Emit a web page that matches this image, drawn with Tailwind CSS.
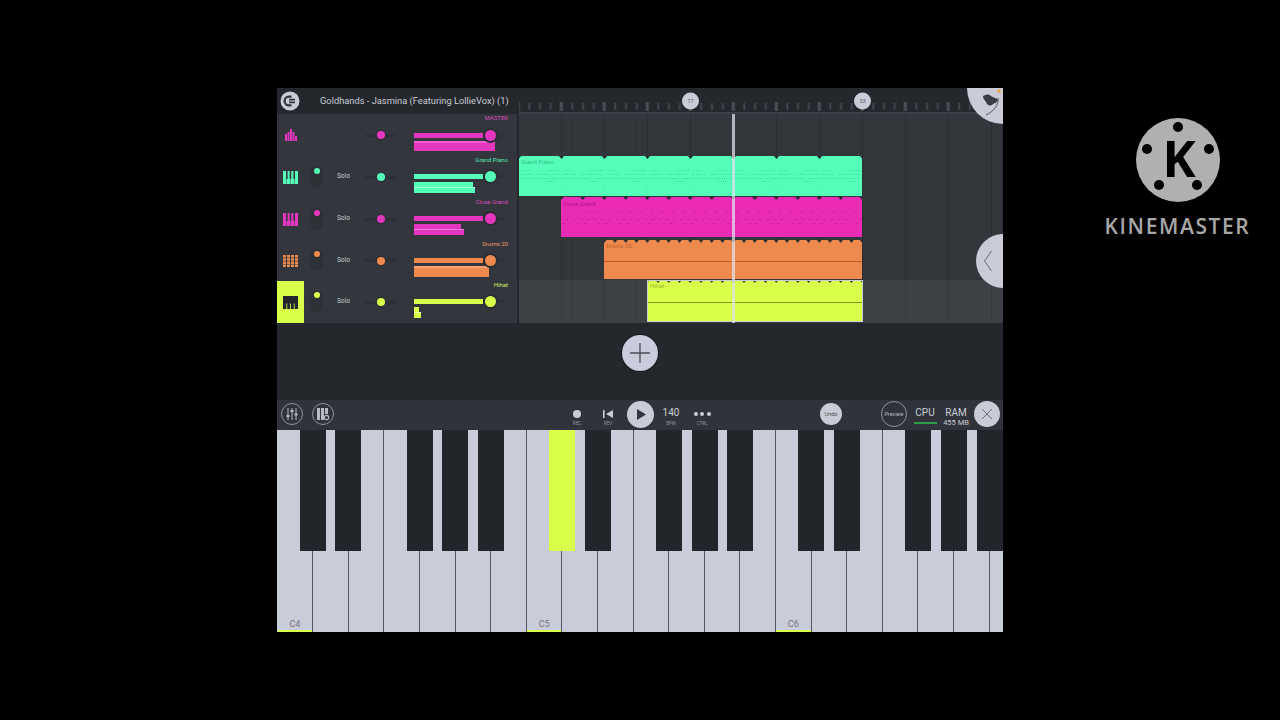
<!DOCTYPE html>
<html lang="en">
<head>
  <meta charset="UTF-8" />
  <title>FL Studio Mobile</title>
  <script src="https://cdn.jsdelivr.net/npm/@tailwindcss/browser@4"></script>
</head>
<body class="relative h-[720px] w-[1280px] overflow-hidden bg-black pl-[277px] pt-[88px] font-['Roboto',sans-serif]">

  <!-- shared icons -->
  <svg class="hidden">
    <symbol id="keys" viewBox="0 0 15 13">
      <path d="M0 0h15v13H0z" fill="currentColor"/>
      <path d="M3 0h1.6v8H3zM6.7 0h1.6v8H6.7zM10.4 0H12v8h-1.6zM3.6 8h.4v5h-.4zM7.3 8h.4v5h-.4zM11 8h.4v5H11z" fill="#33373d"/>
    </symbol>
  </svg>

  <div class="relative h-[544px] w-[726px] overflow-hidden bg-[#24282d]">

    <!-- top bar -->
    <div class="flex h-[26px] bg-[#24272c]">
      <div class="flex w-[242px] shrink-0 items-center">
        <svg class="ml-[3px] h-[20px] w-[20px] shrink-0" viewBox="0 0 20 20">
          <circle cx="10" cy="10" r="9.5" fill="#c9ccd5"/>
          <path d="M11.5 5.6H9a4.4 4.4 0 0 0 0 8.8h2.5" fill="none" stroke="#33363c" stroke-width="2.2"/>
          <path d="M9 8.6h6M9 11.4h6" stroke="#33363c" stroke-width="1.6"/>
        </svg>
        <span class="ml-[20px] whitespace-nowrap text-[9.3px] text-[#c8ccd4]">Goldhands - Jasmina (Featuring LollieVox) (1)</span>
      </div>
      <svg class="h-[26px] w-[484px]" viewBox="0 0 484 26">
        <defs>
          <pattern id="ticks" width="43" height="26" patternUnits="userSpaceOnUse" x="-0.7">
            <rect x="41.5" y="14" width="3" height="9" fill="#4c5056"/>
            <rect x="-1.5" y="14" width="3" height="9" fill="#4c5056"/>
            <rect x="10" y="15" width="2" height="7" fill="#42464c"/>
            <rect x="20.75" y="15" width="2" height="7" fill="#42464c"/>
            <rect x="31.5" y="15" width="2" height="7" fill="#42464c"/>
          </pattern>
        </defs>
        <rect width="484" height="24" fill="url(#ticks)"/>
        <rect y="24" width="484" height="2" fill="#3c4046"/>
        <circle cx="171.5" cy="13" r="8.5" fill="#c9ccd7"/>
        <text x="171.5" y="15" font-size="5.5" text-anchor="middle" fill="#555962">17</text>
        <circle cx="343.5" cy="13" r="8.5" fill="#c9ccd7"/>
        <text x="343.5" y="15" font-size="5.5" text-anchor="middle" fill="#555962">33</text>
      </svg>
    </div>

    <!-- corner button -->
    <div class="absolute -right-[36px] -top-[36px] z-10 h-[72px] w-[72px] rounded-full bg-[#c9ccd7]">
      <svg class="absolute bottom-0 left-0 h-[36px] w-[36px]" viewBox="0 0 36 36">
        <path d="M16 8c3-2 6-2 8 0 3 2 6 2 7 4-1 3-4 3-6 5-3 1-5 0-6-3-1-2-3-3-3-6z" fill="#3a3d44"/>
        <path d="M31 10c1 7-5 14-12 17" fill="none" stroke="#55585f" stroke-width="1"/>
        <circle cx="32" cy="3" r="2" fill="#e8a860"/>
      </svg>
    </div>

    <!-- tracks -->
    <div class="flex h-[209px]">
      <div class="w-[240px] bg-[#33373d]">

        <!-- master -->
        <div class="flex h-[42px]">
          <div class="flex w-[27px] items-center justify-center">
            <svg class="h-[12px] w-[12px]" viewBox="0 0 12 12" fill="#e536c0"><path d="M0 5h2v7H0zM2.5 3h2v9h-2zM5 0h2v12H5zM7.5 3h2v9h-2zM10 7h2v5h-2z"/></svg>
          </div>
          <div class="w-[61px]"></div>
          <div class="flex w-[32px] items-center">
            <div class="h-[3px] w-[12px] bg-[#2d3136]"></div>
            <div class="h-[8px] w-[8px] rounded-full bg-[#e536c0] ring-1 ring-[#2a2d33]"></div>
            <div class="h-[3px] w-[12px] bg-[#2d3136]"></div>
          </div>
          <div class="ml-[17px] w-[94px]">
            <div class="h-[8px] text-right text-[6px] leading-[8px] text-[#d84cb8]">MASTER</div>
            <div class="mt-[7px] flex h-[12px] items-center">
              <div class="h-[5px] w-[69px] bg-[#e536c0]"></div>
              <div class="ml-[2px] h-[11px] w-[11px] rounded-full bg-[#e536c0] ring-2 ring-[#2a2d33]"></div>
              <div class="h-[3px] w-[8px] bg-[#2d3136]"></div>
            </div>
            <div class="h-[10px] w-[81px] border-t-2 border-[#f25ed0] bg-[#e536c0]"></div>
          </div>
        </div>

        <!-- grand piano -->
        <div class="flex h-[42px]">
          <div class="flex w-[27px] items-center justify-center">
            <svg class="h-[13px] w-[15px] text-[#56fdb8]"><use href="#keys"/></svg>
          </div>
          <div class="ml-[6px] mt-[10px] h-[22px] w-[13px] rounded-full bg-[#2d3136] pl-[3.5px] pt-[2px]">
            <div class="h-[6px] w-[6px] rounded-full bg-[#56fdb8]"></div>
          </div>
          <div class="ml-[14px] w-[12px] self-center whitespace-nowrap text-[6.5px] text-[#c8ccd4]">Solo</div>
          <div class="ml-[16px] flex w-[32px] items-center">
            <div class="h-[3px] w-[12px] bg-[#2d3136]"></div>
            <div class="h-[8px] w-[8px] rounded-full bg-[#56fdb8] ring-1 ring-[#2a2d33]"></div>
            <div class="h-[3px] w-[12px] bg-[#2d3136]"></div>
          </div>
          <div class="ml-[17px] w-[94px]">
            <div class="h-[8px] text-right text-[6px] leading-[8px] text-[#56e8ae]">Grand Piano</div>
            <div class="mt-[6px] flex h-[12px] items-center">
              <div class="h-[5px] w-[69px] bg-[#56fdb8]"></div>
              <div class="ml-[2px] h-[11px] w-[11px] rounded-full bg-[#56fdb8] ring-2 ring-[#2a2d33]"></div>
              <div class="h-[3px] w-[8px] bg-[#2d3136]"></div>
            </div>
            <div class="h-[5px] w-[59px] bg-[#56fdb8]"></div>
            <div class="h-[6px] w-[61px] border-t border-[#a8ffdc] bg-[#56fdb8]"></div>
          </div>
        </div>

        <!-- close grand -->
        <div class="flex h-[42px]">
          <div class="flex w-[27px] items-center justify-center">
            <svg class="h-[13px] w-[15px] text-[#e536c0]"><use href="#keys"/></svg>
          </div>
          <div class="ml-[6px] mt-[10px] h-[22px] w-[13px] rounded-full bg-[#2d3136] pl-[3.5px] pt-[2px]">
            <div class="h-[6px] w-[6px] rounded-full bg-[#e536c0]"></div>
          </div>
          <div class="ml-[14px] w-[12px] self-center whitespace-nowrap text-[6.5px] text-[#c8ccd4]">Solo</div>
          <div class="ml-[16px] flex w-[32px] items-center">
            <div class="h-[3px] w-[12px] bg-[#2d3136]"></div>
            <div class="h-[8px] w-[8px] rounded-full bg-[#e536c0] ring-1 ring-[#2a2d33]"></div>
            <div class="h-[3px] w-[12px] bg-[#2d3136]"></div>
          </div>
          <div class="ml-[17px] w-[94px]">
            <div class="h-[8px] text-right text-[6px] leading-[8px] text-[#d84cb8]">Close Grand</div>
            <div class="mt-[6px] flex h-[12px] items-center">
              <div class="h-[5px] w-[69px] bg-[#e536c0]"></div>
              <div class="ml-[2px] h-[11px] w-[11px] rounded-full bg-[#e536c0] ring-2 ring-[#2a2d33]"></div>
              <div class="h-[3px] w-[8px] bg-[#2d3136]"></div>
            </div>
            <div class="h-[5px] w-[47px] bg-[#e536c0]"></div>
            <div class="h-[6px] w-[50px] border-t border-[#f57ad8] bg-[#e536c0]"></div>
          </div>
        </div>

        <!-- drums -->
        <div class="flex h-[41px]">
          <div class="flex w-[27px] items-center justify-center">
            <svg class="h-[12px] w-[15px]" viewBox="0 0 15 12" fill="#ef8a4f"><path d="M0 0h3v2.5H0zM4 0h3v2.5H4zM8 0h3v2.5H8zM12 0h3v2.5h-3zM0 3.2h3v2.5H0zM4 3.2h3v2.5H4zM8 3.2h3v2.5H8zM12 3.2h3v2.5h-3zM0 6.4h3v2.5H0zM4 6.4h3v2.5H4zM8 6.4h3v2.5H8zM12 6.4h3v2.5h-3zM0 9.5h3V12H0zM4 9.5h3V12H4zM8 9.5h3V12H8zM12 9.5h3V12h-3z"/></svg>
          </div>
          <div class="ml-[6px] mt-[9px] h-[22px] w-[13px] rounded-full bg-[#2d3136] pl-[3.5px] pt-[2px]">
            <div class="h-[6px] w-[6px] rounded-full bg-[#ef8a4f]"></div>
          </div>
          <div class="ml-[14px] w-[12px] self-center whitespace-nowrap text-[6.5px] text-[#c8ccd4]">Solo</div>
          <div class="ml-[16px] flex w-[32px] items-center">
            <div class="h-[3px] w-[12px] bg-[#2d3136]"></div>
            <div class="h-[8px] w-[8px] rounded-full bg-[#ef8a4f] ring-1 ring-[#2a2d33]"></div>
            <div class="h-[3px] w-[12px] bg-[#2d3136]"></div>
          </div>
          <div class="ml-[17px] w-[94px]">
            <div class="h-[8px] text-right text-[6px] leading-[8px] text-[#e8986a]">Drums 20</div>
            <div class="mt-[6px] flex h-[12px] items-center">
              <div class="h-[5px] w-[69px] bg-[#ef8a4f]"></div>
              <div class="ml-[2px] h-[11px] w-[11px] rounded-full bg-[#ef8a4f] ring-2 ring-[#2a2d33]"></div>
              <div class="h-[3px] w-[8px] bg-[#2d3136]"></div>
            </div>
            <div class="h-[11px] w-[75px] border-t-2 border-[#f5a273] bg-[#ef8a4f]"></div>
          </div>
        </div>

        <!-- hihat, selected -->
        <div class="flex h-[42px]">
          <div class="flex w-[27px] items-center justify-center bg-[#d8ff4a]">
            <svg class="h-[13px] w-[15px]" viewBox="0 0 15 13" fill="#23262b"><path d="M0 0h15v13H0z"/><path d="M3.4 7.5h.8V13h-.8zM7.1 7.5h.8V13h-.8zM10.8 7.5h.8V13h-.8z" fill="#d8ff4a"/></svg>
          </div>
          <div class="ml-[6px] mt-[9px] h-[22px] w-[13px] rounded-full bg-[#2d3136] pl-[3.5px] pt-[2px]">
            <div class="h-[6px] w-[6px] rounded-full bg-[#d8ff4a]"></div>
          </div>
          <div class="ml-[14px] w-[12px] self-center whitespace-nowrap text-[6.5px] text-[#c8ccd4]">Solo</div>
          <div class="ml-[16px] flex w-[32px] items-center">
            <div class="h-[3px] w-[12px] bg-[#2d3136]"></div>
            <div class="h-[8px] w-[8px] rounded-full bg-[#d8ff4a] ring-1 ring-[#2a2d33]"></div>
            <div class="h-[3px] w-[12px] bg-[#2d3136]"></div>
          </div>
          <div class="ml-[17px] w-[94px]">
            <div class="h-[8px] text-right text-[6px] leading-[8px] text-[#d3ec70]">Hihat</div>
            <div class="mt-[6px] flex h-[12px] items-center">
              <div class="h-[5px] w-[69px] bg-[#d8ff4a]"></div>
              <div class="ml-[2px] h-[11px] w-[11px] rounded-full bg-[#d8ff4a] ring-2 ring-[#2a2d33]"></div>
              <div class="h-[3px] w-[8px] bg-[#2d3136]"></div>
            </div>
            <div class="h-[5px] w-[5px] bg-[#d8ff4a]"></div>
            <div class="h-[6px] w-[7px] border-t border-[#eaffa0] bg-[#d8ff4a]"></div>
          </div>
        </div>
      </div>

      <!-- timeline -->
      <div class="w-[2px] bg-[#24272c]"></div>
      <div class="relative w-[484px] bg-[#33373c] bg-[repeating-linear-gradient(90deg,#0000_0,#0000_41.8px,#0000001a_41.8px,#0000001a_43px),repeating-linear-gradient(90deg,#0000_0,#0000_9.75px,#00000012_9.75px,#00000012_10.75px)]">
        <div class="h-[42px]"></div>

        <!-- grand piano clip -->
        <div class="h-[41px]">
          <svg class="block h-[40px] w-[343px]" viewBox="0 0 343 40">
            <defs>
              <pattern id="gp" width="43" height="40" patternUnits="userSpaceOnUse" x="0">
                <polygon points="40,0 45,0 42.5,3" fill="#24272c"/>
                <polygon points="-3,0 2,0 -0.5,3" fill="#24272c"/>
                <g stroke="#38d69a" stroke-width="0.8" stroke-dasharray="1 1" fill="none">
                  <path d="M3 14.5h8M28 14.5h14M1 18.5h13M19 18.5h22M0 22.5h30M31 22.5h12M28 25.5h7"/>
                </g>
                <rect x="41.5" y="30" width="1" height="1" fill="#38d69a"/>
              </pattern>
            </defs>
            <rect width="343" height="40" fill="#56fdb8"/>
            <rect width="343" height="40" fill="url(#gp)"/>
            <text x="2" y="8" font-size="6" fill="#2cc48a">Grand Piano</text>
          </svg>
        </div>

        <!-- close grand clip -->
        <div class="h-[42px] pl-[42px]">
          <svg class="block h-[40px] w-[301px]" viewBox="0 0 301 40">
            <defs>
              <pattern id="cg" width="21.5" height="40" patternUnits="userSpaceOnUse" x="11">
                <polygon points="8.25,0 13.25,0 10.75,3" fill="#24272c"/>
                <g stroke="#b81e92" stroke-width="0.8" fill="none">
                  <path d="M3 15.5h2M14 15.5h2M1 22.5h2M8 22.5h1.5M15 22.5h2M5 26.5h1.5M12 26.5h2"/>
                </g>
              </pattern>
            </defs>
            <rect width="301" height="40" fill="#ea2bb6"/>
            <rect width="301" height="40" fill="url(#cg)"/>
            <text x="2" y="9" font-size="6" fill="#a81a86">Close Grand</text>
          </svg>
        </div>

        <!-- drums clip -->
        <div class="h-[41px] pl-[85px] pt-[1px]">
          <svg class="block h-[39px] w-[258px]" viewBox="0 0 258 39">
            <defs>
              <pattern id="dr" width="10.75" height="5" patternUnits="userSpaceOnUse" x="5.6">
                <polygon points="3.2,0 7.6,0 5.4,3" fill="#24272c"/>
              </pattern>
            </defs>
            <rect width="258" height="39" fill="#ef8a4f"/>
            <rect width="258" height="4" fill="url(#dr)"/>
            <rect y="21" width="258" height="1" fill="#c25a28"/>
            <text x="2" y="8" font-size="6" fill="#b9622f">Drums 20</text>
          </svg>
        </div>

        <!-- hihat clip -->
        <div class="h-[43px] bg-white/5 pl-[128px]">
          <svg class="block h-[42px] w-[216px]" viewBox="0 0 216 42">
            <defs>
              <pattern id="hh" width="10.75" height="5" patternUnits="userSpaceOnUse" x="5.6">
                <polygon points="3.2,0 7.6,0 5.4,3" fill="#24272c"/>
              </pattern>
            </defs>
            <rect width="216" height="42" fill="#c9ccd3"/>
            <rect x="1" y="1" width="214" height="40" fill="#d8ff4a"/>
            <rect x="1" y="1" width="214" height="4" fill="url(#hh)"/>
            <rect x="1" y="22" width="214" height="1" fill="#7f9a24"/>
            <text x="3" y="8" font-size="6" fill="#9db82e">Hihat</text>
          </svg>
        </div>

        <!-- playhead -->
        <div class="absolute bottom-0 left-[213px] top-0 w-[3px] bg-[#dfe1ea]/75"></div>

        <!-- collapse button -->
        <div class="absolute right-[-27px] top-[120px] flex h-[54px] w-[54px] items-center rounded-full bg-[#c9ccd7] pl-[7px]">
          <svg class="h-[22px] w-[10px]" viewBox="0 0 10 22"><path d="M8.5 1 1.5 11l7 10" fill="none" stroke="#686b75" stroke-width="1"/></svg>
        </div>
      </div>
    </div>

    <!-- add track -->
    <div class="flex h-[77px] justify-center bg-[#24282d] pt-[12px]">
      <div class="flex h-[36px] w-[36px] items-center justify-center rounded-full bg-[#c9ccda] ring-1 ring-[#15171a]">
        <svg class="h-[20px] w-[20px]" viewBox="0 0 20 20"><path d="M0 10h20M10 0v20" stroke="#4c4f58" stroke-width="1.3"/></svg>
      </div>
    </div>

    <!-- transport -->
    <div class="flex h-[30px] bg-[#30343a] pl-[4px]">
      <div class="mt-[3px] flex h-[22px] w-[22px] items-center justify-center rounded-full border border-[#8d9098]">
        <svg class="h-[14px] w-[14px]" viewBox="0 0 14 14" stroke="#b8bbc4" fill="none"><path d="M3 1v12M7 1v12M11 1v12"/><path d="M1.5 9h3M5.5 4h3M9.5 7.5h3" stroke-width="2"/></svg>
      </div>
      <div class="ml-[9px] mt-[3px] flex h-[22px] w-[22px] items-center justify-center rounded-full border border-[#8d9098]">
        <svg class="h-[14px] w-[14px]" viewBox="0 0 14 14" fill="#b8bbc4"><path d="M1 1h3v12H1zM5 1h3v12H5zM9 1h3v6H9z"/><circle cx="10.5" cy="10.5" r="2.2" fill="none" stroke="#b8bbc4" stroke-width="1.2"/></svg>
      </div>

      <div class="ml-[235px] flex w-[16px] flex-col items-center pt-[10px]">
        <div class="h-[8px] w-[8px] rounded-full bg-[#c9ccd7]"></div>
        <div class="mt-[3px] text-[4.5px] leading-[6px] text-[#8f929b]">REC</div>
      </div>
      <div class="ml-[15px] flex w-[16px] flex-col items-center pt-[10px]">
        <svg class="h-[8px] w-[10px]" viewBox="0 0 10 8" fill="#c9ccd7"><path d="M0 0h1.6v8H0zM10 0v8L3 4z"/></svg>
        <div class="mt-[3px] text-[4.5px] leading-[6px] text-[#8f929b]">REV</div>
      </div>
      <div class="ml-[10.5px] mt-[1px] flex h-[27px] w-[27px] items-center justify-center rounded-full bg-[#c9ccd7]">
        <svg class="ml-[2px] h-[11px] w-[9px]" viewBox="0 0 9 11"><path d="M0 0v11l9-5.5z" fill="#33363c"/></svg>
      </div>
      <div class="ml-[7.5px] flex w-[20px] flex-col items-center pt-[8px]">
        <div class="text-[10px] leading-[10px] text-[#c8ccd4]">140</div>
        <div class="mt-[3px] text-[4.5px] leading-[6px] text-[#8f929b]">BPM</div>
      </div>
      <div class="ml-[11px] flex w-[20px] flex-col items-center pt-[12px]">
        <div class="flex gap-[2.5px]">
          <div class="h-[4px] w-[4px] rounded-full bg-[#c9ccd7]"></div>
          <div class="h-[4px] w-[4px] rounded-full bg-[#c9ccd7]"></div>
          <div class="h-[4px] w-[4px] rounded-full bg-[#c9ccd7]"></div>
        </div>
        <div class="mt-[5px] text-[4.5px] leading-[6px] text-[#8f929b]">CTRL</div>
      </div>

      <div class="ml-[108px] mt-[3px] flex h-[22px] w-[22px] items-center justify-center rounded-full bg-[#c9ccd7] text-[5.5px] text-[#44474f]">Undo</div>
      <div class="ml-[39px] mt-[1px] flex h-[26px] w-[26px] items-center justify-center rounded-full border border-[#8d9098] text-[5.5px] text-[#b8bbc4]">Preview</div>
      <div class="ml-[6px] flex w-[24px] flex-col items-center pt-[8px]">
        <div class="text-[10px] leading-[10px] text-[#c8ccd4]">CPU</div>
        <div class="mt-[4px] h-[2px] w-[23px] bg-[#2f9e4a]"></div>
      </div>
      <div class="ml-[4px] flex w-[30px] flex-col items-center pt-[8px]">
        <div class="text-[10px] leading-[10px] text-[#c8ccd4]">RAM</div>
        <div class="whitespace-nowrap text-[7.5px] leading-[9px] text-[#c8ccd4]">455 MB</div>
      </div>
      <div class="ml-[3px] mt-[1px] flex h-[26px] w-[26px] items-center justify-center rounded-full bg-[#c9ccd7]">
        <svg class="h-[12px] w-[12px]" viewBox="0 0 12 12"><path d="m1 1 10 10M11 1 1 11" stroke="#6a6d76" stroke-width="1"/></svg>
      </div>
    </div>

    <!-- keyboard -->
    <div id="keyboard" class="relative flex h-[202px] overflow-hidden bg-[#c9ccd9] pl-[0.7px]"></div>
  </div>

  <!-- watermark -->
  <div class="absolute left-[1100px] top-[117px] flex w-[155px] flex-col items-center">
    <svg class="h-[86px] w-[86px]" viewBox="0 0 86 86">
      <circle cx="43" cy="43" r="42" fill="#b0b0b0"/>
      <circle cx="43" cy="10" r="5" fill="#000"/>
      <circle cx="12" cy="32" r="5" fill="#000"/>
      <circle cx="74" cy="32" r="5" fill="#000"/>
      <circle cx="24" cy="68" r="5" fill="#000"/>
      <circle cx="62" cy="68" r="5" fill="#000"/>
      <text x="44" y="60" font-family="Open Sans" font-weight="700" font-size="50" text-anchor="middle" fill="#000">K</text>
    </svg>
    <div class="mt-[12px] whitespace-nowrap font-['Open_Sans',sans-serif] text-[21px] font-semibold leading-[22px] tracking-[1.6px] text-[#a8a8a8]">KINEMASTER</div>
  </div>

  <script>
    const keyboard = document.getElementById('keyboard');
    const keyWidth = 35.6;
    for (let i = 0; i < 21; i++) {
      const key = document.createElement('div');
      key.className = 'relative h-full shrink-0 border-r border-[#55585f]';
      key.style.width = keyWidth + 'px';
      keyboard.appendChild(key);
      if (i % 7 === 0) {
        const label = document.createElement('div');
        label.className = 'absolute bottom-[1px] left-0 right-0 text-center text-[9px] text-[#74777f]';
        label.textContent = 'C' + (4 + i / 7);
        key.appendChild(label);
        const strip = document.createElement('div');
        strip.className = 'absolute bottom-0 left-0 right-0 h-[2px] bg-[#d8ff4a]';
        key.appendChild(strip);
      }
    }
    const blackKeys = [23, 58, 130, 165, 201, 272, 308, 379, 415, 450, 521, 557, 628, 664, 700];
    blackKeys.forEach((left, i) => {
      const key = document.createElement('div');
      key.className = i === 5
        ? 'absolute top-0 h-[121px] w-[25.5px] bg-[#d8ff4a]'
        : 'absolute top-0 h-[121px] w-[25.5px] bg-[#22262b]';
      key.style.left = left + 'px';
      keyboard.appendChild(key);
    });
  </script>
</body>
</html>
